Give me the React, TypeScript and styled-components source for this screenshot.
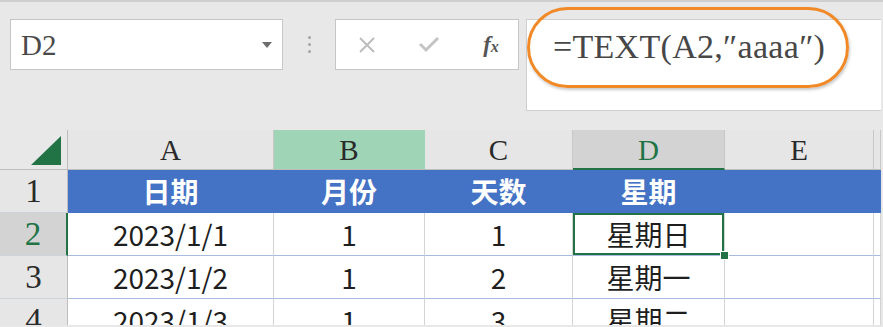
import styled, { createGlobalStyle, css } from "styled-components"

const GlobalStyle = createGlobalStyle`
body{
    margin: 0;
    background-color: #e8e8e8;
}
`

const columns = ["A", "B", "C", "D", "E", ""]
const titles = ["日期", "月份", "天数", "星期", "", ""]
const rows = [
    ["2023/1/1", "1", "1", "星期日", "", ""],
    ["2023/1/2", "1", "2", "星期一", "", ""],
    ["2023/1/3", "1", "3", "星期二", "", ""],
]

const App = () => {
    return (
        <Page>
            <GlobalStyle />
            <Toolbar>
                <NameBox>
                    <NameText>D2</NameText>
                    <Caret />
                </NameBox>
                <Grip>
                    <Dot /><Dot /><Dot />
                </Grip>
                <ButtonBox>
                    <IconButton>
                        <svg width="18" height="16" viewBox="0 0 18 16">
                            <path d="M2 1 L16 15 M16 1 L2 15" stroke="#bdbdbd" strokeWidth="2" fill="none" />
                        </svg>
                    </IconButton>
                    <IconButton>
                        <svg width="22" height="17" viewBox="0 0 22 17">
                            <path d="M2 8 L8 14 L20 2" stroke="#c4c4c4" strokeWidth="3" fill="none" />
                        </svg>
                    </IconButton>
                    <IconButton>
                        <Fx>f<small>x</small></Fx>
                    </IconButton>
                </ButtonBox>
                <FormulaBox>
                    <FormulaText>=TEXT(A2,″aaaa″)</FormulaText>
                    <Ring />
                </FormulaBox>
            </Toolbar>
            <Sheet>
                <Corner>
                    <svg width="30" height="29" viewBox="0 0 30 29">
                        <polygon points="30,0 30,29 0,29" fill="#217346" />
                    </svg>
                </Corner>
                {columns.map((c, i) => (
                    <ColHead key={c + i} $state={c === "B" ? "hover" : c === "D" ? "sel" : undefined}>{c}</ColHead>
                ))}
                <RowHead>1</RowHead>
                {titles.map((t, i) => (
                    <Cell key={"t" + i} $band>{t}</Cell>
                ))}
                {rows.map((r, ri) => [
                    <RowHead key={"h" + ri} $sel={ri === 0}>{ri + 2}</RowHead>,
                    ...r.map((v, ci) => (
                        <Cell key={ri + "-" + ci} $sel={ri === 0 && ci === 3}>{v}</Cell>
                    )),
                ])}
            </Sheet>
        </Page>
    )
}

export default App

const Page = styled.div`
width: 883px;
height: 327px;
overflow: hidden;
background-color: #e8e8e8;
border-top: 2px solid #cfcfcf;
box-sizing: border-box;
`
const Toolbar = styled.div`
height: 128px;
box-sizing: border-box;
padding: 17px 0 0 10px;
display: flex;
align-items: flex-start;
`
const NameBox = styled.div`
width: 273px;
height: 51px;
box-sizing: border-box;
border: 1px solid #c6c6c6;
background-color: #fff;
display: flex;
align-items: center;
justify-content: space-between;
padding: 0 10px 0 10px;
`
const NameText = styled.span`
font-family: "Liberation Serif", serif;
font-size: 29px;
color: #4a4a4a;
padding-top: 2px;
`
const Caret = styled.div`
width: 0;
height: 0;
border-left: 5px solid transparent;
border-right: 5px solid transparent;
border-top: 6px solid #6d6d6d;
`
const Grip = styled.div`
width: 52px;
height: 51px;
display: flex;
flex-direction: column;
align-items: center;
justify-content: center;
gap: 4px;
`
const Dot = styled.div`
width: 3px;
height: 3px;
border-radius: 2px;
background-color: #a5a5a5;
`
const ButtonBox = styled.div`
width: 184px;
height: 51px;
box-sizing: border-box;
border: 1px solid #c6c6c6;
background-color: #fff;
display: flex;
align-items: center;
justify-content: space-between;
padding: 0 14px 0 18px;
`
const IconButton = styled.div`
width: 26px;
display: flex;
justify-content: center;
align-items: center;
`
const Fx = styled.span`
font-family: "Liberation Serif", serif;
font-style: italic;
font-weight: bold;
font-size: 23px;
color: #555;
small{
    font-size: 16px;
}
`
const FormulaBox = styled.div`
position: relative;
margin-left: 7px;
width: 355px;
height: 92px;
box-sizing: border-box;
border: 1px solid #cfcfcf;
border-right: none;
background-color: #fff;
padding: 8px 0 0 26px;
`
const FormulaText = styled.div`
font-family: "Liberation Serif", "DejaVu Serif", serif;
font-size: 34px;
line-height: 38px;
color: #474747;
white-space: nowrap;
letter-spacing: 0.3px;
`
const Ring = styled.div`
position: absolute;
left: 0;
top: -13px;
width: 322px;
height: 81px;
box-sizing: border-box;
border: 3px solid #f08a28;
border-radius: 41px;
box-shadow: 1px 2px 3px rgba(0, 0, 0, 0.22);
`
const Sheet = styled.div`
width: 881px;
height: 195px;
overflow: hidden;
display: grid;
grid-template-columns: 68px 206px 151px 148px 152px 149px 7px;
grid-template-rows: 40px 43px 43px 43px 43px;
`
const Corner = styled.div`
box-sizing: border-box;
border-right: 1px solid #bdbdbd;
border-bottom: 1px solid #bdbdbd;
display: flex;
justify-content: flex-end;
align-items: flex-end;
padding: 0 6px 4px 0;
`
const ColHead = styled.div<{ $state?: "hover" | "sel" }>`
box-sizing: border-box;
border-right: 1px solid #c8c8c8;
border-bottom: 1px solid #bdbdbd;
background-color: #e6e6e6;
display: flex;
justify-content: center;
align-items: center;
font-family: "Liberation Serif", serif;
font-size: 29px;
color: #2a2a2a;
padding-top: 2px;
${p => p.$state === "hover" && css`
    background-color: #9fd5b6;
    border-right-color: #9fd5b6;
`}
${p => p.$state === "sel" && css`
    background-color: #d3d3d3;
    color: #217346;
    border-bottom: 2px solid #217346;
`}
`
const RowHead = styled.div<{ $sel?: boolean }>`
box-sizing: border-box;
border-right: 1px solid #bdbdbd;
border-bottom: 1px solid #cfd3da;
background-color: ${p => (p.$sel ? "#d3d3d3" : "#e6e6e6")};
display: flex;
justify-content: center;
align-items: center;
font-family: "Liberation Serif", serif;
font-size: 33px;
color: ${p => (p.$sel ? "#217346" : "#2a2a2a")};
${p => p.$sel && css`
    border-right: 2px solid #217346;
`}
`
const Cell = styled.div<{ $band?: boolean; $sel?: boolean }>`
position: relative;
box-sizing: border-box;
border-right: 1px solid #d4d4d4;
border-bottom: 1px solid #a9bce0;
background-color: #fff;
display: flex;
justify-content: center;
align-items: center;
font-family: "Noto Sans CJK SC", sans-serif;
font-size: 28px;
color: #1e1e1e;
white-space: nowrap;
${p => p.$band && css`
    background-color: #4472c4;
    border-color: #4472c4;
    color: #fff;
    font-weight: bold;
    font-size: 28px;
`}
${p => p.$sel && css`
    box-shadow: inset 0 0 0 2px #217346;
    &::after{
        content: "";
        position: absolute;
        right: -5px;
        bottom: -5px;
        width: 7px;
        height: 7px;
        background-color: #217346;
        border: 1px solid #fff;
        z-index: 2;
    }
`}
`
